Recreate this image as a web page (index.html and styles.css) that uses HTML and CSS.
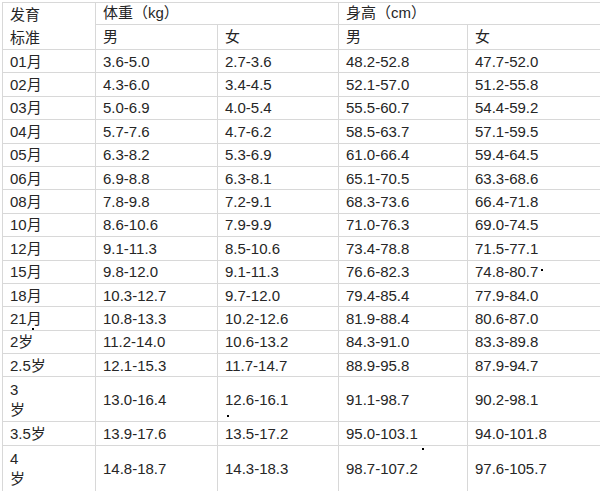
FILE: index.html
```html
<!DOCTYPE html>
<html lang="zh">
<head>
<meta charset="utf-8">
<link rel="stylesheet" href="styles.css">
</head>
<body>
<div class="wrap">
<table class="grid">
<colgroup>
<col class="c1"><col class="c2"><col class="c3"><col class="c4"><col class="c5">
</colgroup>
<tr class="h1"><td rowspan="2" class="lab">发育<br>标准</td><td colspan="2">体重（kg）</td><td colspan="2">身高（cm）</td></tr>
<tr class="h2"><td>男</td><td>女</td><td>男</td><td>女</td></tr>
<tr><td>01月</td><td>3.6-5.0</td><td>2.7-3.6</td><td>48.2-52.8</td><td>47.7-52.0</td></tr>
<tr><td>02月</td><td>4.3-6.0</td><td>3.4-4.5</td><td>52.1-57.0</td><td>51.2-55.8</td></tr>
<tr><td>03月</td><td>5.0-6.9</td><td>4.0-5.4</td><td>55.5-60.7</td><td>54.4-59.2</td></tr>
<tr><td>04月</td><td>5.7-7.6</td><td>4.7-6.2</td><td>58.5-63.7</td><td>57.1-59.5</td></tr>
<tr><td>05月</td><td>6.3-8.2</td><td>5.3-6.9</td><td>61.0-66.4</td><td>59.4-64.5</td></tr>
<tr><td>06月</td><td>6.9-8.8</td><td>6.3-8.1</td><td>65.1-70.5</td><td>63.3-68.6</td></tr>
<tr><td>08月</td><td>7.8-9.8</td><td>7.2-9.1</td><td>68.3-73.6</td><td>66.4-71.8</td></tr>
<tr><td>10月</td><td>8.6-10.6</td><td>7.9-9.9</td><td>71.0-76.3</td><td>69.0-74.5</td></tr>
<tr><td>12月</td><td>9.1-11.3</td><td>8.5-10.6</td><td>73.4-78.8</td><td>71.5-77.1</td></tr>
<tr><td>15月</td><td>9.8-12.0</td><td>9.1-11.3</td><td>76.6-82.3</td><td>74.8-80.7</td></tr>
<tr><td>18月</td><td>10.3-12.7</td><td>9.7-12.0</td><td>79.4-85.4</td><td>77.9-84.0</td></tr>
<tr><td>21月</td><td>10.8-13.3</td><td>10.2-12.6</td><td>81.9-88.4</td><td>80.6-87.0</td></tr>
<tr><td>2岁</td><td>11.2-14.0</td><td>10.6-13.2</td><td>84.3-91.0</td><td>83.3-89.8</td></tr>
<tr><td>2.5岁</td><td>12.1-15.3</td><td>11.7-14.7</td><td>88.9-95.8</td><td>87.9-94.7</td></tr>
<tr class="tall"><td>3<br>岁</td><td>13.0-16.4</td><td>12.6-16.1</td><td>91.1-98.7</td><td>90.2-98.1</td></tr>
<tr><td>3.5岁</td><td>13.9-17.6</td><td>13.5-17.2</td><td>95.0-103.1</td><td>94.0-101.8</td></tr>
<tr class="tall2"><td>4<br>岁</td><td>14.8-18.7</td><td>14.3-18.3</td><td>98.7-107.2</td><td>97.6-105.7</td></tr>
</table>
<span class="dot d1"></span>
<span class="dot d2"></span>
<span class="dot d3"></span>
<span class="dot d4"></span>
</div>
</body>
</html>
```
FILE: styles.css
```css
html, body {
  margin: 0;
  padding: 0;
  background: #fff;
}
.wrap {
  position: relative;
  width: 600px;
  height: 491px;
  overflow: hidden;
  padding: 2px 0 0 2px;
  box-sizing: border-box;
}
.grid {
  border-collapse: collapse;
  table-layout: fixed;
  width: 660px;
  font-family: "Liberation Sans", "Noto Sans CJK SC", sans-serif;
  font-size: 15px;
  color: #262626;
}
.c1 { width: 93px; }
.c2 { width: 122px; }
.c3 { width: 121px; }
.c4 { width: 129px; }
.c5 { width: 195px; }
.grid tr { height: 23.4px; }
.grid tr.h1 { height: 21px; }
.grid tr.h2 { height: 24px; }
.grid tr.tall { height: 45px; }
.grid tr.tall2 { height: 47px; }
.grid td {
  border: 1px solid #d8d8d8;
  padding: 1px 0 0 7px;
  line-height: 18px;
  vertical-align: middle;
  white-space: nowrap;
  overflow: hidden;
}
.grid tr.h1 td { padding-top: 0; }
.grid td.lab {
  line-height: 23px;
  vertical-align: top;
  padding-top: 0;
}
.grid tr.tall td:first-child,
.grid tr.tall2 td:first-child {
  line-height: 20px;
}
.dot {
  position: absolute;
  width: 2px;
  height: 2px;
  background: #000;
}
.d1 { left: 32px; top: 328px; }
.d2 { left: 227px; top: 415px; }
.d3 { left: 422px; top: 448px; }
.d4 { left: 541px; top: 269px; }
```
